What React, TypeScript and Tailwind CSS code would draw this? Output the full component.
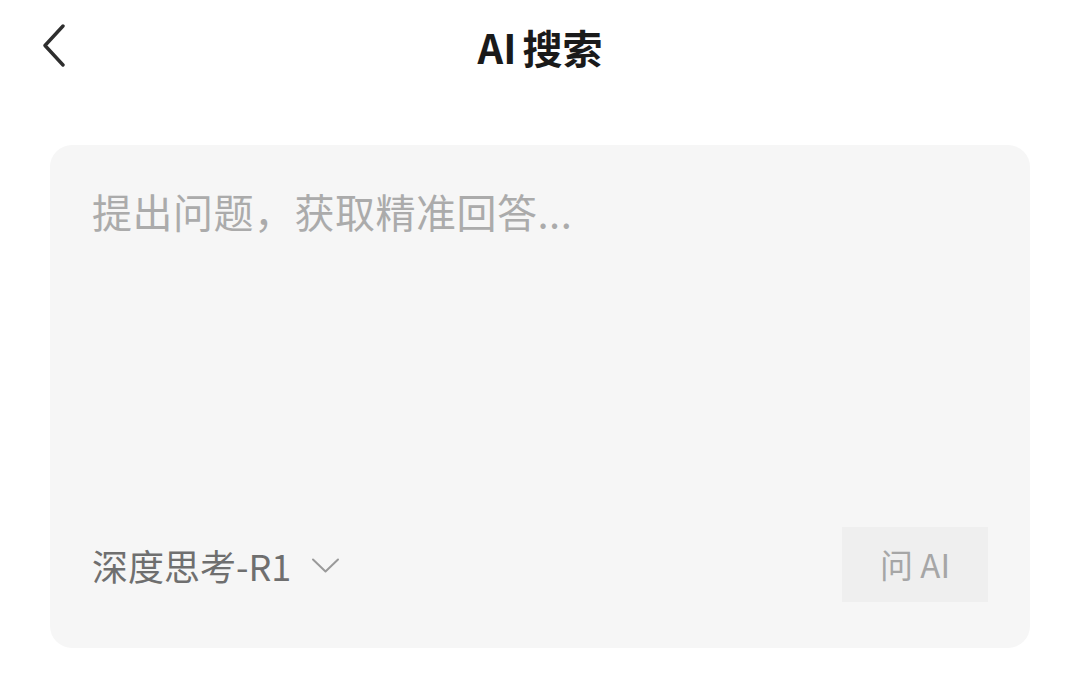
import React from "react";

export default function App() {
  return (
    <div
      className="w-[1080px] h-[677px] bg-white overflow-hidden"
      style={{ fontFamily: '"Noto Sans CJK SC", "Noto Sans", sans-serif' }}
    >
      <div className="relative h-[92px] flex items-center justify-center">
        <button className="absolute left-[40px] top-[22px] w-[28px] h-[46px] flex items-center justify-center">
          <svg width="24" height="44" viewBox="0 0 24 44" fill="none">
            <path d="M21 3 L3 22.5 L21 42" stroke="#2e2e2e" strokeWidth="3.4" strokeLinecap="round" strokeLinejoin="round" />
          </svg>
        </button>
        <h1 className="text-[40px] leading-none font-bold text-[#1a1a1a] mt-[2px]">
          AI<span className="ml-[6px]">搜索</span>
        </h1>
      </div>
      <div className="ml-[50px] mt-[53px] w-[980px] h-[503px] rounded-[22px] bg-[#f6f6f6] pt-[40px] pb-[46px] pl-[42px] pr-[42px] flex flex-col justify-between">
        <div className="text-[40px] leading-[52px] text-[#ababab] tracking-[0.5px]">提出问题，获取精准回答...</div>
        <div className="flex items-center justify-between">
          <div className="flex items-center">
            <span className="text-[36px] leading-none text-[#6f6f6f]">深度思考-R1</span>
            <svg className="ml-[20px] mt-[2px]" width="29" height="17" viewBox="0 0 29 17" fill="none">
              <path d="M2 2.5 L14.5 14.5 L27 2.5" stroke="#9a9a9a" strokeWidth="2" strokeLinecap="round" strokeLinejoin="round" />
            </svg>
          </div>
          <button className="w-[146px] h-[75px] bg-[#efefef] flex items-center justify-center text-[33px] text-[#a6a6a6] leading-none">
            问 AI
          </button>
        </div>
      </div>
    </div>
  );
}
